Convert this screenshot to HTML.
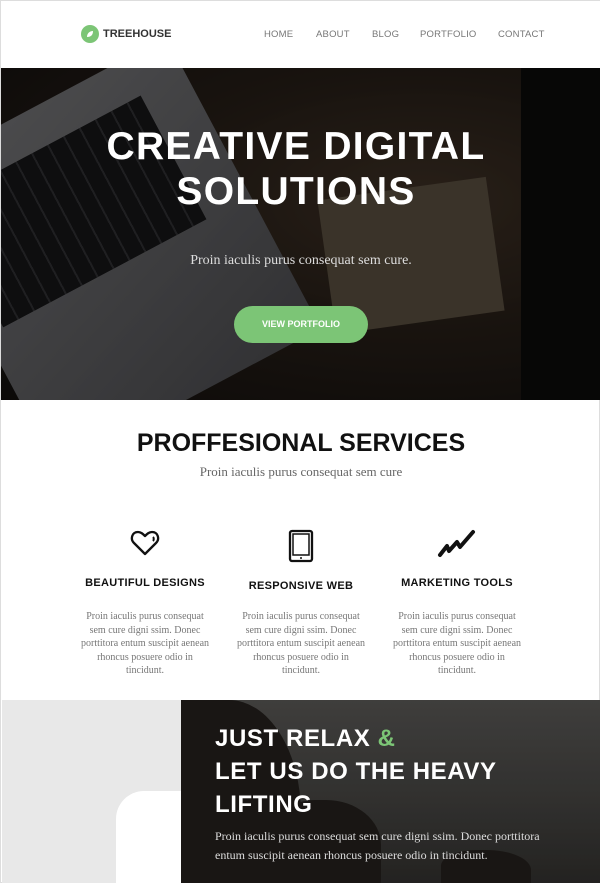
<!DOCTYPE html>
<html><head><style>
*{margin:0;padding:0;box-sizing:border-box}
body{width:600px;height:883px;background:#fff;font-family:"Liberation Sans",sans-serif;position:relative;overflow:hidden;border:1px solid #ddd}
.nav{position:absolute;top:0;left:0;width:600px;height:67px;background:#fff}
.logo{position:absolute;left:80px;top:24px;display:flex;align-items:center;font-weight:bold;font-size:11px;color:#333}
.logo span{width:18px;height:18px;border-radius:50%;background:#7cc576;margin-right:4px;display:inline-block;position:relative}
.menu{position:absolute;top:28px;font-size:9.5px;color:#777;letter-spacing:.2px}
.hero{position:absolute;top:67px;left:0;width:600px;height:332px;overflow:hidden;
background:radial-gradient(ellipse at 70% 40%,#4a3a2c 0%,#2e241c 45%,#151210 100%)}
.laptop{position:absolute;left:-40px;top:20px;width:300px;height:330px;background:linear-gradient(160deg,#8c8c8f,#5b5b5f);transform:rotate(-28deg);border-radius:14px}
.keys{position:absolute;left:20px;top:40px;width:230px;height:140px;background:repeating-linear-gradient(90deg,#1b1b1d 0 16px,#3a3a3c 16px 18px),#222}
.book{position:absolute;left:325px;top:120px;width:170px;height:135px;background:#6a5e4c;transform:rotate(-8deg)}
.hov{position:absolute;inset:0;background:rgba(0,0,0,.45)}
.h1{position:absolute;top:56px;left:0;width:590px;text-align:center;color:#fff;font-weight:bold;font-size:39px;line-height:45px;letter-spacing:1.3px}
.sub{position:absolute;top:185px;left:0;width:600px;text-align:center;color:#ddd;font-family:"Liberation Serif",serif;font-size:14px}
.btn{position:absolute;left:233px;top:238px;width:134px;height:37px;border-radius:19px;background:#7cc576;color:#fff;font-size:9px;font-weight:bold;text-align:center;line-height:37px}
.h2{position:absolute;top:428px;width:600px;text-align:center;font-size:25px;font-weight:bold;color:#111}
.s2{position:absolute;top:463px;width:600px;text-align:center;font-family:"Liberation Serif",serif;font-size:13px;color:#666}
.col{position:absolute;width:150px;text-align:center}
.col h3{font-size:11px;font-weight:bold;color:#111;position:absolute;width:100%;letter-spacing:.3px}
.col p{position:absolute;left:8px;width:134px;top:0;font-family:"Liberation Serif",serif;font-size:10px;line-height:13.6px;color:#777}
.grey{position:absolute;left:1px;top:699px;width:179px;height:183px;background:#e8e8e8}
.blob{position:absolute;left:115px;top:790px;width:65px;height:100px;background:#fff;border-radius:28px 0 0 0}
.dark{position:absolute;left:180px;top:699px;width:419px;height:183px;background:linear-gradient(180deg,#4a4947 0%,#3a3937 55%,#2a2927 100%);overflow:hidden}
.rock{position:absolute;background:#1e1b18;border-radius:40% 50% 10% 10%}
.h4{position:absolute;left:34px;top:22px;color:#fff;font-weight:bold;font-size:24px;line-height:33px;letter-spacing:.6px}
.p4{position:absolute;left:34px;top:127px;color:#ddd;font-family:"Liberation Serif",serif;font-size:12px;line-height:19px;width:350px}
</style></head><body>
<div class="nav">
<div class="logo"><span><svg width="18" height="18" viewBox="0 0 18 18"><path d="M6 12C6 8 9 6 12 6C12 10 10 12 6 12Z" fill="#fff"/></svg></span>TREEHOUSE</div>
<div class="menu" style="left:263px">HOME</div>
<div class="menu" style="left:315px">ABOUT</div>
<div class="menu" style="left:371px">BLOG</div>
<div class="menu" style="left:419px">PORTFOLIO</div>
<div class="menu" style="left:497px">CONTACT</div>
</div>
<div class="hero">
<div class="laptop"><div class="keys"></div></div>
<div class="book"></div>
<div style="position:absolute;left:520px;top:0;width:80px;height:332px;background:#0e0d0c"></div>
<div class="hov"></div>
<div class="h1">CREATIVE DIGITAL<br>SOLUTIONS</div>
<div class="sub">Proin iaculis purus consequat sem cure.</div>
<div class="btn">VIEW PORTFOLIO</div>
</div>
<div class="h2">PROFFESIONAL SERVICES</div>
<div class="s2">Proin iaculis purus consequat sem cure</div>

<svg style="position:absolute;left:129px;top:528px" width="30" height="28" viewBox="0 0 30 28"><path d="M15 25L4 14C0 10 2 3 8 3C11 3 13 5 15 7C17 5 19 3 22 3C28 3 30 10 26 14Z" fill="none" stroke="#111" stroke-width="2.3" stroke-linejoin="round"/><path d="M23 8C24 9 24 11 23 12" stroke="#111" stroke-width="2" fill="none"/></svg>
<svg style="position:absolute;left:287px;top:528px" width="26" height="34" viewBox="0 0 26 34"><rect x="2" y="2" width="22" height="30" rx="2" fill="none" stroke="#111" stroke-width="2.3"/><rect x="5" y="5" width="16" height="21" fill="none" stroke="#111" stroke-width="1.5"/><circle cx="13" cy="29" r="1" fill="#111"/></svg>
<svg style="position:absolute;left:436px;top:528px" width="40" height="30" viewBox="0 0 40 30"><path d="M3 26L10 17L12 22L20 13L23 18L36 3" fill="none" stroke="#111" stroke-width="4" stroke-linejoin="round" stroke-linecap="round"/></svg>

<div class="col" style="left:69px;top:576px"><h3>BEAUTIFUL DESIGNS</h3><p style="top:33px">Proin iaculis purus consequat sem cure digni ssim. Donec porttitora entum suscipit aenean rhoncus posuere odio in tincidunt.</p></div>
<div class="col" style="left:225px;top:579px"><h3>RESPONSIVE WEB</h3><p style="top:30px">Proin iaculis purus consequat sem cure digni ssim. Donec porttitora entum suscipit aenean rhoncus posuere odio in tincidunt.</p></div>
<div class="col" style="left:381px;top:576px"><h3>MARKETING TOOLS</h3><p style="top:33px">Proin iaculis purus consequat sem cure digni ssim. Donec porttitora entum suscipit aenean rhoncus posuere odio in tincidunt.</p></div>

<div class="grey"></div>
<div class="blob"></div>
<div class="dark">
<div class="rock" style="left:0;top:0;width:120px;height:190px;border-radius:0 60% 0 0"></div>
<div class="rock" style="left:90px;top:100px;width:110px;height:90px"></div>
<div class="rock" style="left:260px;top:150px;width:90px;height:40px"></div>
<div style="position:absolute;inset:0;background:rgba(0,0,0,.15)"></div>
<div class="h4">JUST RELAX <span style="color:#7cc576">&amp;</span><br>LET US DO THE HEAVY<br>LIFTING</div>
<div class="p4">Proin iaculis purus consequat sem cure digni ssim. Donec porttitora entum suscipit aenean rhoncus posuere odio in tincidunt.</div>
</div>
</body></html>
